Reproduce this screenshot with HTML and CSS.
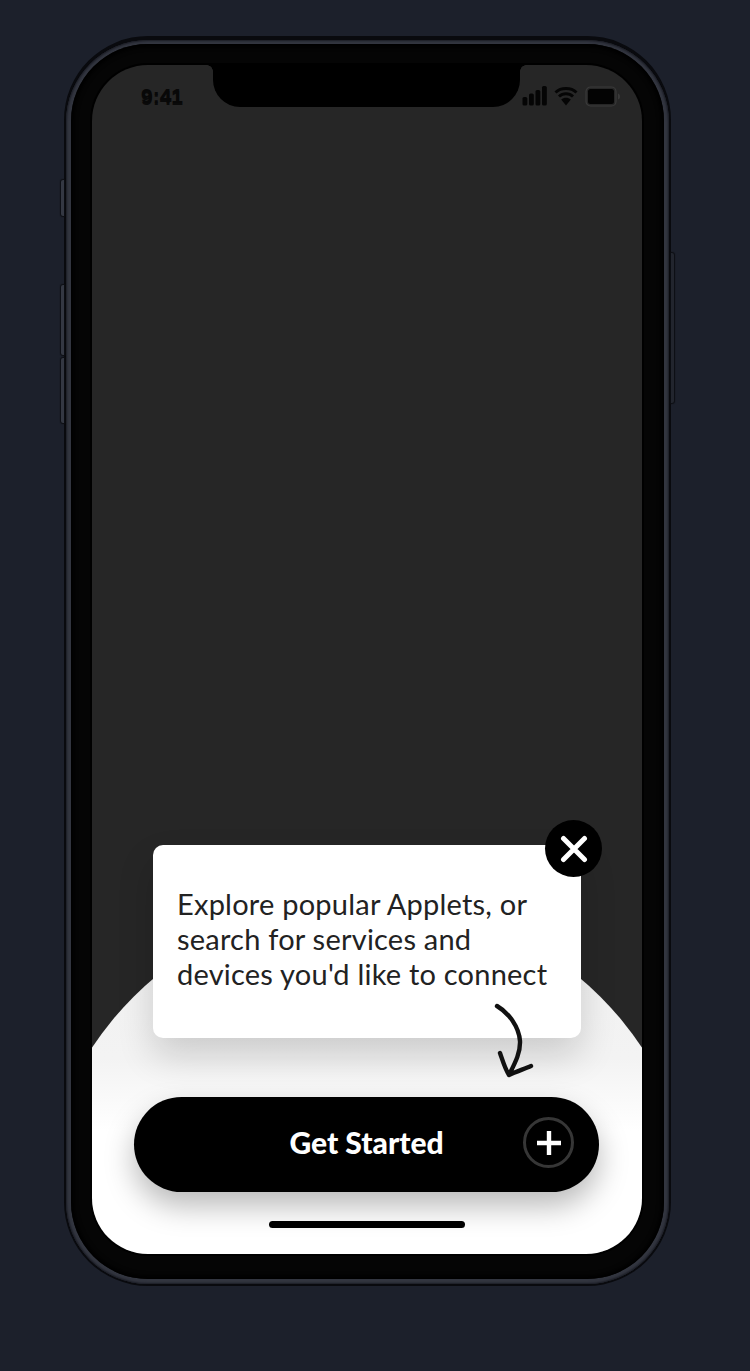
FILE: index.html
```html
<!DOCTYPE html>
<html lang="en">
<head>
<meta charset="utf-8">
<title>Get Started</title>
<link rel="stylesheet" href="styles.css">
</head>
<body>
<div class="phone">
  <span class="side side-mute"></span>
  <span class="side side-up"></span>
  <span class="side side-down"></span>
  <span class="side-power"></span>
  <div class="rim">
    <div class="bezel">
      <main class="screen">
        <div class="curve"></div>
        <header class="status">
          <span class="time">9:41</span>
          <div class="notch"></div>
          <div class="status-icons">
            <svg class="signal" width="26" height="20" viewBox="0 0 26 20"><g fill="#050505"><rect x="0.500" y="11" width="4.800" height="8.500" rx="1.600"/><rect x="7" y="7.500" width="4.800" height="12" rx="1.600"/><rect x="13.500" y="4" width="4.800" height="15.500" rx="1.600"/><rect x="20" y="0" width="4.800" height="19.500" rx="1.600"/></g></svg>
            <svg class="wifi" width="24" height="20" viewBox="0 0 24 20"><g fill="none" stroke="#050505" stroke-width="3"><path d="M1.500 6.500C7 1.300 17 1.300 22.500 6.500"/><path d="M5 10.500C9 6.800 15 6.800 19 10.500"/></g><path d="M7.200 13.600C10 11 14 11 16.800 13.600L12 19.500Z" fill="#050505"/></svg>
            <svg class="battery" width="36" height="22" viewBox="0 0 36 22"><rect x="1" y="1" width="30" height="19" rx="4.500" fill="none" stroke="#3a3a3a" stroke-width="1.200"/><rect x="3" y="3" width="26" height="15" rx="2.500" fill="#030303"/><path d="M33 7.500C34.500 8 35 9 35 10.500S34.500 13 33 13.500Z" fill="#3a3a3a"/></svg>
          </div>
        </header>
        <section class="tip">
          <p class="tip-text">Explore popular Applets, or search for services and devices you'd like to connect</p>
          <button class="tip-close" aria-label="Close">
            <svg width="28" height="28" viewBox="0 0 28 28"><path d="M3.500 3.500L24.500 24.500M24.500 3.500L3.500 24.500" stroke="#fff" stroke-width="5" stroke-linecap="round"/></svg>
          </button>
          <svg class="tip-arrow" width="44" height="80" viewBox="0 0 44 80"><path d="M5 3C17 10 27 24 28 38C28.500 50 23 60 17 72M8 50C10.500 57 13 66 17 72C23 69 32 66 39 63" fill="none" stroke="#111" stroke-width="4.400" stroke-linecap="round" stroke-linejoin="round"/></svg>
        </section>
        <button class="cta">
          <span></span>
          <span class="cta-label">Get Started</span>
          <span class="cta-plus">
            <svg width="26" height="26" viewBox="0 0 26 26"><path d="M13 1V25M1 13H25" stroke="#fff" stroke-width="4.400"/></svg>
          </span>
        </button>
        <div class="home-bar"></div>
      </main>
    </div>
  </div>
</div>
</body>
</html>
```
FILE: styles.css
```css
* { box-sizing: border-box; }
html, body { margin: 0; height: 100%; }
body {
  background: #1c202b;
  font-family: "Lato", "Liberation Sans", sans-serif;
  padding: 36px 0 0 64px;
  overflow: hidden;
}
.phone {
  position: relative;
  width: 607px;
  height: 1250px;
  border: 2px solid #090a0e;
  border-top-width: 4px;
  border-radius: 84px;
  background: #090a0e;
}
.rim {
  height: 100%;
  padding: 4px 5px 5px;
  border-radius: 82px;
  background: #32353f;
  box-shadow: inset 0 0 2px 1px #1a1c24;
}
.bezel {
  height: 100%;
  padding: 21px 22px 23px 21px;
  border-radius: 77px;
  background: #050505;
  box-shadow: inset 0 0 4px 3px #000;
}
.screen {
  position: relative;
  display: flex;
  flex-direction: column;
  height: 1189px;
  border-radius: 56px;
  overflow: hidden;
  background: #262626;
  box-shadow: 0 0 0 2px #000;
}
.curve {
  position: absolute;
  top: 835px;
  left: -55px;
  width: 660px;
  height: 660px;
  border-radius: 50%;
  background: linear-gradient(#f0f0f0 0, #f3f3f3 24%, #fff 35%);
}
.status {
  position: relative;
  display: flex;
  align-items: flex-start;
  height: 42px;
  flex: none;
}
.time {
  width: 121px;
  padding: 19px 0 0 49px;
  font: 700 21px/24px "Liberation Sans", sans-serif;
  color: #080808;
  text-shadow: 0 2px 0 #0a0a0a;
  white-space: nowrap;
}
.notch {
  position: relative;
  width: 307px;
  height: 42px;
  background: #000;
  border-radius: 0 0 27px 27px;
}
.notch::before,
.notch::after {
  content: "";
  position: absolute;
  top: 0;
  width: 6px;
  height: 6px;
}
.notch::before {
  left: -6px;
  background: radial-gradient(circle at 0 100%, transparent 5.500px, #000 6px);
}
.notch::after {
  right: -6px;
  background: radial-gradient(circle at 100% 100%, transparent 5.500px, #000 6px);
}
.status-icons {
  display: flex;
  align-items: flex-start;
  gap: 7px;
  padding: 21px 0 0 2px;
}
.wifi { margin-left: -1px; }
.tip {
  position: relative;
  z-index: 1;
  width: 428px;
  height: 193px;
  margin: auto 0 0 61px;
  padding: 41px 24px 0;
  background: #fff;
  border-radius: 10px;
  box-shadow: 0 18px 36px rgba(0, 0, 0, .16);
}
.tip-text {
  margin: 0;
  font-size: 29px;
  line-height: 35px;
  letter-spacing: .22px;
  color: #222;
}
.tip-close {
  position: absolute;
  top: -25px;
  right: -21px;
  display: flex;
  align-items: center;
  justify-content: center;
  width: 57px;
  height: 57px;
  padding: 0;
  border: 0;
  border-radius: 50%;
  background: #000;
}
.tip-arrow {
  position: absolute;
  top: 158px;
  left: 339px;
}
.cta {
  position: relative;
  z-index: 1;
  display: grid;
  grid-template-columns: 1fr auto 1fr;
  align-items: center;
  flex: none;
  width: 465px;
  height: 95px;
  margin: 59px 0 0 42px;
  padding: 0 25px;
  border: 0;
  border-radius: 48px;
  background: #000;
  color: #fff;
  font-family: inherit;
  box-shadow: 0 14px 30px rgba(0, 0, 0, .28);
}
.cta-label {
  margin-top: -5px;
  font-size: 30px;
  font-weight: 900;
}
.cta-plus {
  display: flex;
  align-items: center;
  justify-content: center;
  justify-self: end;
  width: 51px;
  height: 51px;
  margin-top: -4px;
  border: 3.500px solid #363636;
  border-radius: 50%;
}
.home-bar {
  position: relative;
  z-index: 1;
  flex: none;
  width: 196px;
  height: 7px;
  margin: 29px 0 26px 177px;
  border-radius: 4px;
  background: #000;
}
.side {
  position: absolute;
  left: -5px;
  width: 3px;
  background: #343843;
  box-shadow: 0 0 1px 1px #0d0e13;
  border-radius: 2px 0 0 2px;
}
.side-mute { top: 140px; height: 36px; }
.side-up { top: 245px; height: 70px; }
.side-down { top: 318px; height: 65px; }
.side-power {
  position: absolute;
  top: 213px;
  right: -5px;
  width: 3px;
  height: 150px;
  background: #22252e;
  box-shadow: 0 0 1px 1px #0d0e13;
  border-radius: 0 2px 2px 0;
}
```
